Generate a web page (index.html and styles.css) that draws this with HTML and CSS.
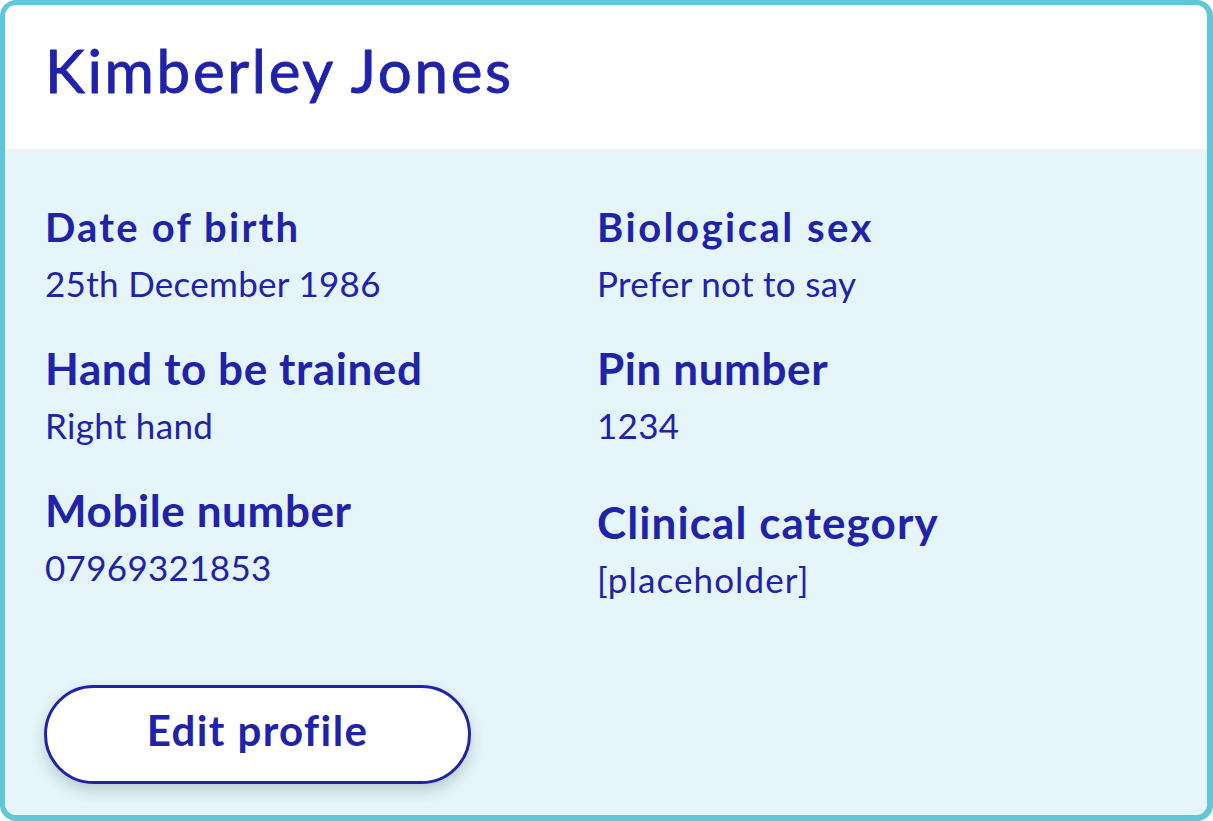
FILE: index.html
```html
<!DOCTYPE html>
<html lang="en">
<head>
<meta charset="utf-8">
<title>Profile</title>
<link rel="stylesheet" href="styles.css">
</head>
<body>
<div class="frame">
  <div class="card">
    <header class="card-header">
      <h1 class="name">Kimberley Jones</h1>
    </header>
    <section class="card-body">
      <div class="fields">
        <div class="col">
          <div class="field">
            <div class="label label-sm">Date of birth</div>
            <div class="value">25th December 1986</div>
          </div>
          <div class="field">
            <div class="label">Hand to be trained</div>
            <div class="value">Right hand</div>
          </div>
          <div class="field">
            <div class="label">Mobile number</div>
            <div class="value">07969321853</div>
          </div>
        </div>
        <div class="col">
          <div class="field">
            <div class="label label-sm label-wide">Biological sex</div>
            <div class="value">Prefer not to say</div>
          </div>
          <div class="field">
            <div class="label">Pin number</div>
            <div class="value">1234</div>
          </div>
          <div class="field field-shift">
            <div class="label label-wide">Clinical category</div>
            <div class="value value-wide">[placeholder]</div>
          </div>
        </div>
      </div>
      <button class="edit-btn" type="button">Edit profile</button>
    </section>
  </div>
</div>
</body>
</html>
```
FILE: styles.css
```css
* { box-sizing: border-box; }
html, body { margin: 0; padding: 0; }
body {
  width: 1213px;
  height: 821px;
  font-family: "Lato", "Noto Sans", "Liberation Sans", sans-serif;
  color: #2023a9;
  background: #ffffff;
}
.frame {
  width: 1213px;
  height: 821px;
  background: #5ec8d8;
  border-radius: 16px;
  padding: 5px 6px 6px 5px;
}
.card {
  height: 100%;
  background: #ffffff;
  border-radius: 11px;
  display: flex;
  flex-direction: column;
  overflow: hidden;
}
.card-header {
  height: 144px;
  padding: 35px 40px 0;
  flex: none;
}
.name {
  margin: 0;
  font-size: 60px;
  line-height: 60px;
  font-weight: 400;
  letter-spacing: 2.7px;
  -webkit-text-stroke: 0.9px #2023a9;
}
.card-body {
  flex: 1;
  background: #e5f5f9;
  border-radius: 0 0 14px 14px;
  padding: 58px 40px 0;
}
.fields {
  display: grid;
  grid-template-columns: 552px 1fr;
}
.col {
  display: flex;
  flex-direction: column;
  gap: 43px;
}
.field {
  display: flex;
  flex-direction: column;
  gap: 16px;
}
.col .field:not(:first-child) { gap: 15px; }
.field-shift { margin-top: 12px; }
.label {
  font-size: 44px;
  line-height: 44px;
  font-weight: 700;
  letter-spacing: 0.6px;
}
.label-sm {
  font-size: 40px;
  line-height: 40px;
  letter-spacing: 2.2px;
}
.label.label-wide { letter-spacing: 1.1px; }
.label-sm.label-wide { letter-spacing: 2.5px; }
.value {
  font-size: 35px;
  line-height: 40px;
  font-weight: 400;
  letter-spacing: 0.3px;
}
.value-wide { letter-spacing: 1.1px; }
.edit-btn {
  display: block;
  margin-top: 86px;
  margin-left: -1px;
  width: 427px;
  height: 99px;
  border: 3.5px solid #2023a9;
  border-radius: 50px;
  background: #ffffff;
  color: #2023a9;
  font-family: "Lato", "Noto Sans", "Liberation Sans", sans-serif;
  font-size: 42px;
  font-weight: 700;
  letter-spacing: 1.4px;
  padding: 0 0 9px;
  box-shadow: 0 7px 14px rgba(40, 70, 90, 0.22);
}
```
